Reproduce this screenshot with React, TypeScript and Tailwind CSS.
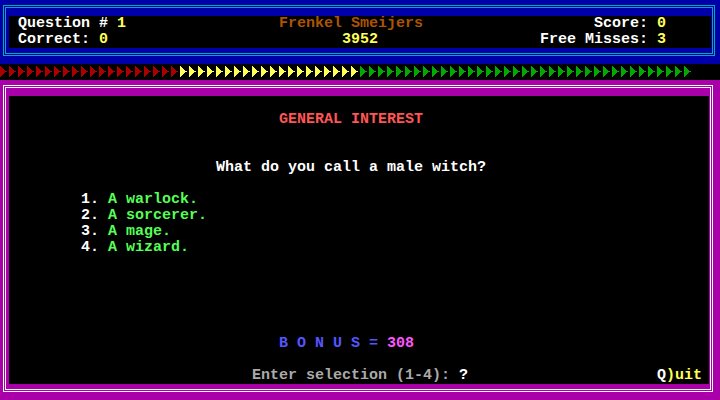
import React from "react";

const ARROW = "M0 2h1v1h1v1h1v1h1v1h1v1h2v1h-2v1h-1v1h-1v1h-1v1h-1v1h-1z";

function ArrowRow() {
  const items = Array.from({ length: 77 }, (_, i) => i);
  return (
    <svg width="720" height="16" viewBox="0 0 720 16" shapeRendering="crispEdges" className="block">
      {items.map((i) => (
        <path
          key={i}
          d={ARROW}
          transform={`translate(${i * 9} 0)`}
          fill={i < 20 ? "#AA0000" : i < 40 ? "#FFFF55" : "#00AA00"}
        />
      ))}
    </svg>
  );
}

function Row({ children, className = "" }: { children?: React.ReactNode; className?: string }) {
  return <div className={`flex h-[16px] whitespace-pre ${className}`}>{children}</div>;
}

export default function App() {
  return (
    <div className="w-[720px] h-[400px] overflow-hidden bg-black font-['Liberation_Mono',monospace] font-bold text-[15px] leading-[16px]">
      {/* Top status panel */}
      <div className="h-[64px] bg-[#0000AA] pt-[5px] pl-[3px]">
        <div className="w-[712px] h-[51px] border-[3px] border-double border-[#00AAAA] pt-[8px] pl-[3px]">
          <div className="w-[702px] h-[32px] bg-black">
            <Row>
              <span className="w-[270px] pl-[9px] text-white">
                Question # <span className="text-[#FFFF55]">1</span>
              </span>
              <span className="text-[#AA5500]">Frenkel Smeijers</span>
              <span className="ml-auto pr-[45px] text-white">
                Score: <span className="text-[#FFFF55]">0</span>
              </span>
            </Row>
            <Row>
              <span className="w-[333px] pl-[9px] text-white">
                Correct: <span className="text-[#FFFF55]">0</span>
              </span>
              <span className="text-[#FFFF55]">3952</span>
              <span className="ml-auto pr-[45px] text-white">
                Free Misses: <span className="text-[#FFFF55]">3</span>
              </span>
            </Row>
          </div>
        </div>
      </div>

      {/* Progress arrows */}
      <div className="h-[16px] bg-black">
        <ArrowRow />
      </div>

      {/* Question panel */}
      <div className="h-[320px] bg-[#AA00AA] pt-[5px] pl-[3px]">
        <div className="w-[710px] h-[307px] border-[3px] border-double border-white pt-[8px] pl-[3px]">
          <div className="w-[700px] h-[288px] bg-black flex flex-col">
            <Row />
            <Row className="pl-[270px] text-[#FF5555]">GENERAL INTEREST</Row>
            <Row />
            <Row />
            <Row className="pl-[207px] text-white">What do you call a male witch?</Row>
            <Row />
            {["A warlock.", "A sorcerer.", "A mage.", "A wizard."].map((t, i) => (
              <Row key={t} className="pl-[72px] text-white">
                {`${i + 1}. `}
                <span className="text-[#55FF55]">{t}</span>
              </Row>
            ))}
            <Row />
            <Row />
            <Row />
            <Row />
            <Row />
            <Row className="pl-[270px] text-[#5555FF]">
              {"B O N U S = "}
              <span className="text-[#FF55FF]">308</span>
            </Row>
            <Row />
            <Row>
              <span className="w-[648px] pl-[243px] text-[#AAAAAA]">
                {"Enter selection (1-4): "}
                <span className="text-white">?</span>
              </span>
              <span className="text-white">
                Q<span className="text-[#FFFF55]">)uit</span>
              </span>
            </Row>
          </div>
        </div>
      </div>
    </div>
  );
}
